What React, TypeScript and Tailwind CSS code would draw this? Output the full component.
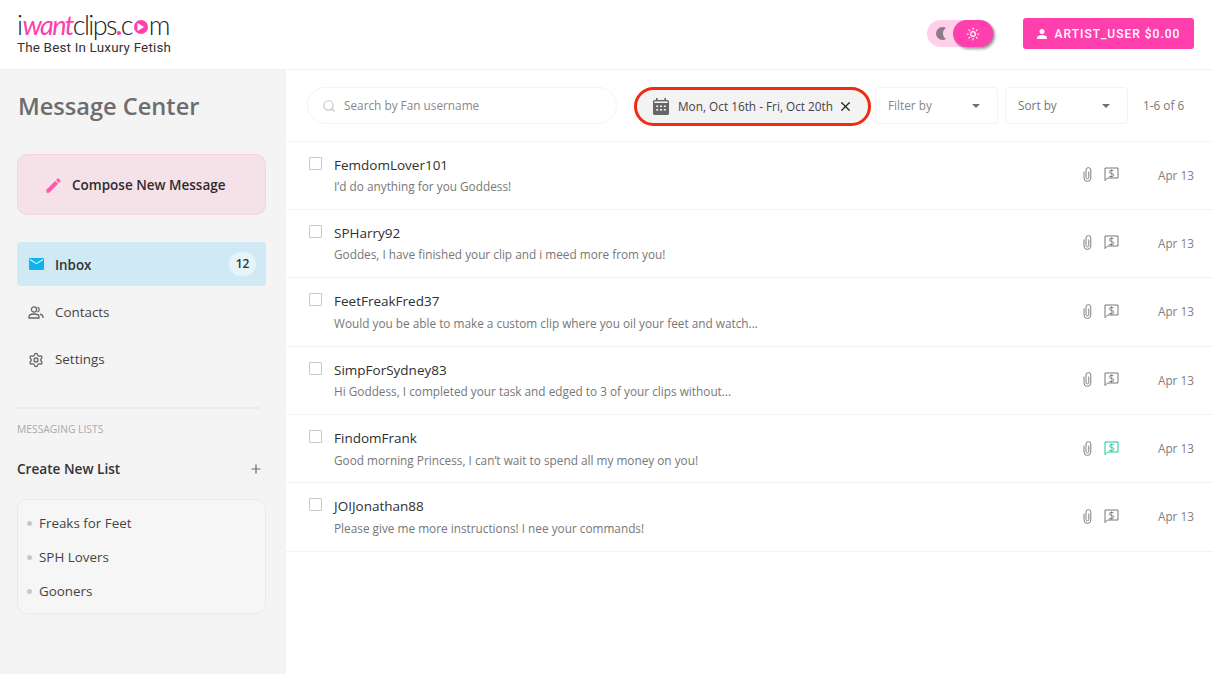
import React from "react";
import { Settings, Search, X, Plus, Sun } from "lucide-react";

const rows = [
  ["FemdomLover101", "I’d do anything for you Goddess!"],
  ["SPHarry92", "Goddes, I have finished your clip and i meed more from you!"],
  ["FeetFreakFred37", "Would you be able to make a custom clip where you oil your feet and watch..."],
  ["SimpForSydney83", "Hi Goddess, I completed your task and edged to 3 of your clips without..."],
  ["FindomFrank", "Good morning Princess, I can’t wait to spend all my money on you!"],
  ["JOIJonathan88", "Please give me more instructions! I nee your commands!"],
];

function Caret() {
  return (
    <svg width="8" height="4" viewBox="0 0 8 4">
      <path d="M0 0h8L4 4z" fill="#707070" />
    </svg>
  );
}

function DollarBubble({ green }: { green?: boolean }) {
  const c = green ? "#22c39a" : "#777777";
  return (
    <svg width="15" height="15" viewBox="0 0 15 15" fill="none">
      <path d="M1 1h13v10H3.6L1 13.6z" stroke={c} strokeWidth="1" />
      <text x="7.5" y="10" textAnchor="middle" fontSize="10.5" fontFamily="Open Sans, sans-serif" fill={c}>$</text>
    </svg>
  );
}

function Clip() {
  return (
    <svg width="9" height="15" viewBox="0 0 9 15" fill="none" stroke="#808080" strokeWidth="1">
      <path d="M5.8 4.5v6a1.4 1.4 0 0 1-2.8 0V3a2.4 2.4 0 0 1 4.8 0v8a3.4 3.4 0 0 1-6.8 0V4.5" />
    </svg>
  );
}

function ContactsIcon() {
  return (
    <svg width="16" height="13" viewBox="0 0 16 13" fill="none" stroke="#666" strokeWidth="1.3">
      <circle cx="6" cy="3.5" r="2.6" />
      <path d="M1 12v-1.2C1 9 3.4 8 6 8s5 1 5 2.8V12z" />
      <path d="M9.5 1a2.7 2.7 0 0 1 0 5M12 8.2c1.7.5 3 1.3 3 2.8V12" />
    </svg>
  );
}

function MailIcon() {
  return (
    <svg width="15" height="12" viewBox="0 0 15 12">
      <rect width="15" height="12" rx="1" fill="#0db4ee" />
      <path d="M1 1.5l6.5 4.2L14 1.5" fill="none" stroke="#dff3fb" strokeWidth="1.1" />
    </svg>
  );
}

function PencilIcon() {
  return (
    <svg width="19" height="19" viewBox="0 0 24 24">
      <path fill="#ff5aa8" d="M3 17.25V21h3.75L17.81 9.94l-3.75-3.75L3 17.25zM20.71 7.04a1 1 0 0 0 0-1.41l-2.34-2.34a1 1 0 0 0-1.41 0l-1.83 1.83 3.75 3.75 1.83-1.83z" />
    </svg>
  );
}

function CalendarIcon() {
  return (
    <svg width="16" height="17" viewBox="0 0 16 17">
      <path fill="#666" d="M3 0h1.6v2h6.8V0H13v2h1.4A1.6 1.6 0 0 1 16 3.6v11.8a1.6 1.6 0 0 1-1.6 1.6H1.6A1.6 1.6 0 0 1 0 15.4V3.6A1.6 1.6 0 0 1 1.6 2H3z" />
      <rect x="1.4" y="3.4" width="13.2" height="1.6" fill="#f3f3f3" />
      <g fill="#f3f3f3">
        <rect x="3.2" y="7.5" width="2" height="1.6" />
        <rect x="7" y="7.5" width="2" height="1.6" />
        <rect x="10.8" y="7.5" width="2" height="1.6" />
        <rect x="3.2" y="11" width="2" height="1.6" />
        <rect x="7" y="11" width="2" height="1.6" />
        <rect x="10.8" y="11" width="2" height="1.6" />
      </g>
    </svg>
  );
}

function MoonIcon() {
  return (
    <svg width="11" height="13" viewBox="0 0 11 13">
      <path fill="#8e7a88" d="M7.5 0A6.5 6.5 0 1 0 7.5 13 6.8 6.8 0 0 0 11 12 6.5 6.5 0 0 1 11 1 6.8 6.8 0 0 0 7.5 0z" />
    </svg>
  );
}

function UserIcon() {
  return (
    <svg width="10" height="10" viewBox="0 0 10 10">
      <circle cx="5" cy="2.5" r="2.5" fill="#fff" />
      <path fill="#fff" d="M0 10V8.6C0 7 2.6 6 5 6s5 1 5 2.6V10z" />
    </svg>
  );
}

export default function App() {
  return (
    <div className="min-h-[674px] bg-white font-['Open_Sans',sans-serif] text-[#333] flex flex-col">
      <header className="h-[70px] shrink-0 flex items-center justify-between pl-[17px] pr-[19px] pb-[2px] border-b border-[#f2f2f2]">
        <div className="flex flex-col">
          <div className="flex items-center h-[28px] text-[27px] leading-[28px] font-['Lato',sans-serif] font-light tracking-[-1.6px] text-[#222]">
            <span>i</span>
            <span className="text-[#ff3fae] italic font-normal ml-[1px]">want</span>
            <span>clips</span>
            <span className="text-[#ff3fae] font-bold">.</span>
            <span>c</span>
            <span className="ml-[2px] mr-[1px] mt-[3px] flex h-[14px] w-[14px] shrink-0 items-center justify-center rounded-full bg-[#ff3fae]">
              <svg width="7" height="8" viewBox="0 0 7 8"><path d="M0.5 0l6.5 4-6.5 4z" fill="#fff" /></svg>
            </span>
            <span>m</span>
          </div>
          <div className="mt-[1px] font-['Roboto',sans-serif] text-[13.4px] leading-[16px] tracking-[0.2px] text-[#333]">The Best In Luxury Fetish</div>
        </div>
        <div className="flex items-center gap-[29px]">
          <div className="relative h-[27px] w-[67px] rounded-full bg-[#ffd0ea]">
            <span className="absolute left-[8px] top-[7px] flex"><MoonIcon /></span>
            <div className="absolute right-[1px] top-0 flex h-[27px] w-[40px] items-center justify-center rounded-full bg-[#ff3fae] shadow-[2px_2px_3px_rgba(0,0,0,0.4)]">
              <Sun size={14} stroke="#fff" strokeWidth={2} />
            </div>
          </div>
          <button className="flex h-[31px] w-[171px] items-center justify-center gap-[8px] rounded-[3px] bg-[#ff3fae] font-['Roboto',sans-serif] text-[12px] font-medium tracking-[1px] text-white">
            <UserIcon />
            ARTIST_USER $0.00
          </button>
        </div>
      </header>

      <div className="flex flex-1">
        <aside className="w-[286px] shrink-0 bg-[#f4f4f4] px-[17px] pt-[19px] pb-[60px]">
          <h1 className="text-[23.6px] leading-[34px] font-semibold text-[#6d6d6d] pl-[1px]">Message Center</h1>
          <button className="mt-[31px] flex h-[61px] w-[249px] items-center gap-[9px] rounded-[10px] border border-[#f6d3de] bg-[#f5e2e9] pl-[26px] pt-[1px] text-[13.5px] font-semibold text-[#2f2a30]">
            <PencilIcon />
            Compose New Message
          </button>
          <nav className="mt-[27px] flex flex-col text-[13.4px]">
            <div className="flex h-[44px] w-[249px] items-center rounded-[3px] bg-[#cfe9f5] pl-[12px] pr-[10px] font-semibold text-[#333]">
              <MailIcon />
              <span className="ml-[11px] pt-[2px]">Inbox</span>
              <span className="ml-auto flex h-[24px] w-[27px] items-center justify-center rounded-full bg-[#e6f4fa] text-[12px]">12</span>
            </div>
            <div className="mt-[3px] flex h-[47px] items-center pl-[11px] text-[#444]">
              <ContactsIcon />
              <span className="ml-[11px]">Contacts</span>
            </div>
            <div className="flex h-[47px] items-center pl-[11px] text-[#444]">
              <Settings size={16} stroke="#666" />
              <span className="ml-[11px]">Settings</span>
            </div>
          </nav>
          <div className="mt-[24px] h-[2px] w-[243px] bg-[#ebebeb]" />
          <div className="mt-[13px] text-[10.3px] leading-[14px] text-[#aaaaaa]">MESSAGING LISTS</div>
          <div className="mt-[24px] flex h-[18px] w-[249px] items-center justify-between pr-[3px] text-[13.6px] font-semibold text-[#333]">
            Create New List
            <Plus size={14} stroke="#666" />
          </div>
          <div className="mt-[21px] flex h-[115px] w-[249px] flex-col justify-center gap-[14px] rounded-[10px] border border-[#e9e9e9] bg-[#f6f6f6] pl-[9px] pt-[2px] text-[13.4px] text-[#444]">
            {["Freaks for Feet", "SPH Lovers", "Gooners"].map((t) => (
              <div key={t} className="flex h-[20px] items-center">
                <span className="h-[5px] w-[5px] rounded-full bg-[#c8c8c8]" />
                <span className="ml-[7px]">{t}</span>
              </div>
            ))}
          </div>
        </aside>

        <main className="flex-1 min-w-0">
          <div className="flex h-[71.5px] items-start border-b border-[#f4f4f4] pl-[21px] pt-[17px] text-[11.8px]">
            <div className="flex h-[37px] w-[310px] items-center rounded-full border border-[#f3f3f3] pl-[14px] text-[#888]">
              <Search size={14} stroke="#c4c4c4" />
              <span className="ml-[8px]">Search by Fan username</span>
            </div>
            <div className="ml-[17px] flex h-[39px] w-[237px] items-center rounded-full border-[3px] border-[#f32a12] bg-[#f3f3f3] pl-[16px] text-[#444]">
              <CalendarIcon />
              <span className="ml-[9px]">Mon, Oct 16th - Fri, Oct 20th</span>
              <X size={15} stroke="#222" strokeWidth={2} className="ml-[5px]" />
            </div>
            <div className="ml-[4px] flex h-[37px] w-[123px] items-center justify-between rounded-[4px] border border-[#f3f3f3] pl-[12px] pr-[17px] text-[#888]">
              Filter by <Caret />
            </div>
            <div className="ml-[7px] flex h-[37px] w-[123px] items-center justify-between rounded-[4px] border border-[#f3f3f3] pl-[12px] pr-[17px] text-[#777]">
              Sort by <Caret />
            </div>
            <div className="ml-[15px] flex h-[37px] items-center text-[#777]">1-6 of 6</div>
          </div>
          {rows.map(([name, msg], i) => (
            <div key={name} className="flex h-[68.4px] items-start border-b border-[#f3f3f3] pl-[23px] pr-[19px]">
              <span className="mt-[15px] h-[13px] w-[13px] rounded-[1px] border border-[#c9c9c9]" />
              <div className="ml-[12px] min-w-0 flex-1 pt-[13px]">
                <div className="text-[13.5px] leading-[20px] text-[#2f2f2f]">{name}</div>
                <div className="mt-[3.5px] text-[11.8px] leading-[16px] text-[#777]">{msg}</div>
              </div>
              <div className="mt-[25px] flex items-center">
                <Clip />
                <span className="ml-[12px] flex"><DollarBubble green={i === 4} /></span>
                <span className="ml-[38px] w-[37px] whitespace-nowrap text-right text-[11.8px] leading-[16px] text-[#808080]">Apr 13</span>
              </div>
            </div>
          ))}
        </main>
      </div>
    </div>
  );
}
